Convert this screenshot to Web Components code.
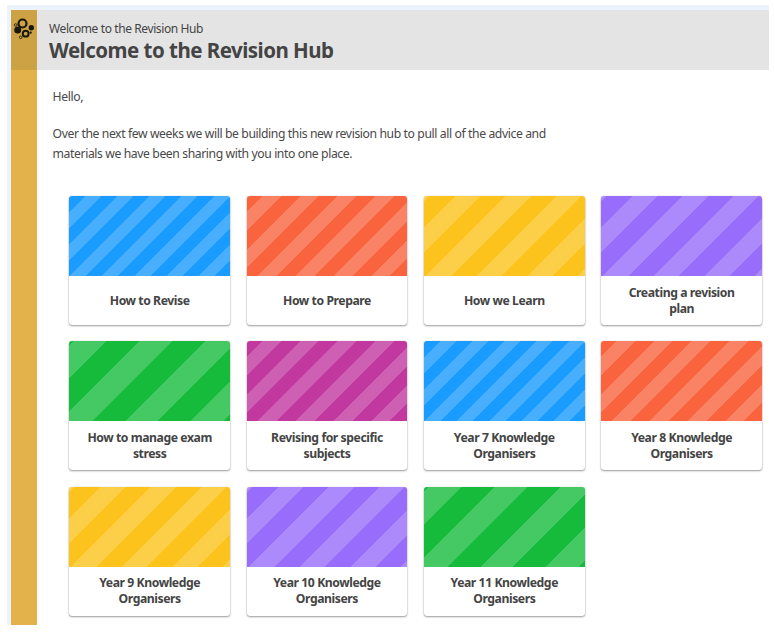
<!DOCTYPE html>
<html lang="en"><head><meta charset="utf-8"><title>Revision Hub</title>
<style>
html,body{margin:0;padding:0;background:#fff}
body{font-family:"Noto Sans",sans-serif;color:#444;width:775px;height:632px;overflow:hidden}
</style></head><body>
<hub-frame>
  <hub-header slot="header" kicker="Welcome to the Revision Hub" heading="Welcome to the Revision Hub"></hub-header>
  <hub-intro>
    <p>Hello,</p>
    <p>Over the next few weeks we will be building this new revision hub to pull all of the advice and materials we have been sharing with you into one place.</p>
  </hub-intro>
  <hub-grid>
    <hub-tile tone="blue">How to Revise</hub-tile>
    <hub-tile tone="orange">How to Prepare</hub-tile>
    <hub-tile tone="yellow">How we Learn</hub-tile>
    <hub-tile tone="purple">Creating a revision plan</hub-tile>
    <hub-tile tone="green">How to manage exam stress</hub-tile>
    <hub-tile tone="magenta">Revising for specific subjects</hub-tile>
    <hub-tile tone="blue">Year 7 Knowledge Organisers</hub-tile>
    <hub-tile tone="orange">Year 8 Knowledge Organisers</hub-tile>
    <hub-tile tone="yellow">Year 9 Knowledge Organisers</hub-tile>
    <hub-tile tone="purple">Year 10 Knowledge Organisers</hub-tile>
    <hub-tile tone="green">Year 11 Knowledge Organisers</hub-tile>
  </hub-grid>
</hub-frame>
<script>
const sheet=(css,html)=>`<style>${css}</style>${html}`;
class HubFrame extends HTMLElement{constructor(){super();this.attachShadow({mode:'open'}).innerHTML=sheet(`
:host{display:block;box-sizing:border-box;margin:5px 0 0 7px;width:762px;height:620px;background:#edf3fc;padding:5px 0 0 4px}
.wrap{display:flex;height:100%;background:#fff}
.rail{flex:0 0 26px;background:#e3b24b}
.cap{height:60px;background:#cda244;display:flex;justify-content:center;padding-top:6px;box-sizing:border-box}
.main{flex:1;min-width:0}
svg{display:block}
`,`<div class="wrap"><div class="rail"><div class="cap">
<svg width="22" height="24" viewBox="0 0 22 24" fill="none" stroke="#1a1710">
<circle cx="9.5" cy="7.5" r="4" stroke-width="2.2"/>
<circle cx="4.7" cy="13.9" r="3.5" fill="#1a1710" stroke="none"/>
<circle cx="12.7" cy="17.7" r="2.9" stroke-width="2"/>
<circle cx="18.3" cy="11.7" r="2.7" fill="#1a1710" stroke="none"/>
<circle cx="2.7" cy="9" r="1.3" stroke-width="1" opacity=".8"/>
<circle cx="7.7" cy="21.3" r="1.3" stroke-width="1" opacity=".8"/>
<circle cx="17.7" cy="16.7" r="1.1" fill="#1a1710" stroke="none"/>
</svg></div></div><div class="main"><slot name="header"></slot><slot></slot></div></div>`)}}
class HubHeader extends HTMLElement{connectedCallback(){if(this.shadowRoot)return;this.attachShadow({mode:'open'}).innerHTML=sheet(`
:host{display:block;height:60px;background:#e4e4e4;box-sizing:border-box;padding:11px 12px 0;color:#444}
.k{font-size:12px;line-height:16px;letter-spacing:-.4px}
h1{margin:0;font-size:20.5px;line-height:26px;font-weight:700;letter-spacing:-.52px}
`,`<div class="k">${this.getAttribute('kicker')}</div><h1>${this.getAttribute('heading')}</h1>`)}}
class HubIntro extends HTMLElement{constructor(){super();this.attachShadow({mode:'open'}).innerHTML=sheet(`
:host{display:block;padding:17px 15.6px 0;width:505px;font-size:12.2px;line-height:20px;letter-spacing:-.4px;color:#484848}
::slotted(p){margin:0 0 17px}
`,`<slot></slot>`)}}
class HubGrid extends HTMLElement{constructor(){super();this.attachShadow({mode:'open'}).innerHTML=sheet(`
:host{display:grid;grid-template-columns:repeat(4,160.67px);column-gap:16.66px;row-gap:16.4px;margin:32px 0 0 32.33px}
`,`<slot></slot>`)}}
const w='rgba(255,255,255,.2)',t='transparent';
const band=(stops)=>`repeating-linear-gradient(135deg,${stops})`;
const NARROW=band(`${t} 0,${t} 11.4px,${w} 11.4px,${w} 22.8px`);
const MID=band(`${t} 0,${t} 10.8px,${w} 10.8px,${w} 24.17px,${t} 24.17px,${t} 26.7px`);
const WIDE=band(`${w} 0,${w} 4.2px,${t} 4.2px,${t} 22.1px,${w} 22.1px,${w} 35.8px`);
const BROAD=band(`${t} 0,${t} 3.46px,${w} 3.46px,${w} 26.66px,${t} 26.66px,${t} 46.4px`);
const TONES={
 blue:['#1a9bff',NARROW],
 orange:['#f9643f',MID],
 yellow:['#fcc31c',WIDE],
 purple:['#986dfb',WIDE],
 green:['#16bb3c',BROAD],
 magenta:['#c1389f',MID]
};
class HubTile extends HTMLElement{connectedCallback(){if(this.shadowRoot)return;const [c,g]=TONES[this.getAttribute('tone')];this.attachShadow({mode:'open'}).innerHTML=sheet(`
:host{display:flex;flex-direction:column;height:129px;box-sizing:border-box;background:#fff;border-radius:3px;overflow:hidden;box-shadow:0 1px 2px rgba(0,0,0,.38),0 0 1px rgba(0,0,0,.3)}
.img{height:80px;background-color:${c};background-image:${g}}
.lbl{flex:1;display:flex;align-items:center;justify-content:center;text-align:center;padding:0 14px;font-size:12.2px;line-height:16px;font-weight:700;letter-spacing:-.43px;color:#444}
`,`<div class="img"></div><div class="lbl"><span><slot></slot></span></div>`)}}
customElements.define('hub-frame',HubFrame);
customElements.define('hub-header',HubHeader);
customElements.define('hub-intro',HubIntro);
customElements.define('hub-grid',HubGrid);
customElements.define('hub-tile',HubTile);
</script>
</body></html>
